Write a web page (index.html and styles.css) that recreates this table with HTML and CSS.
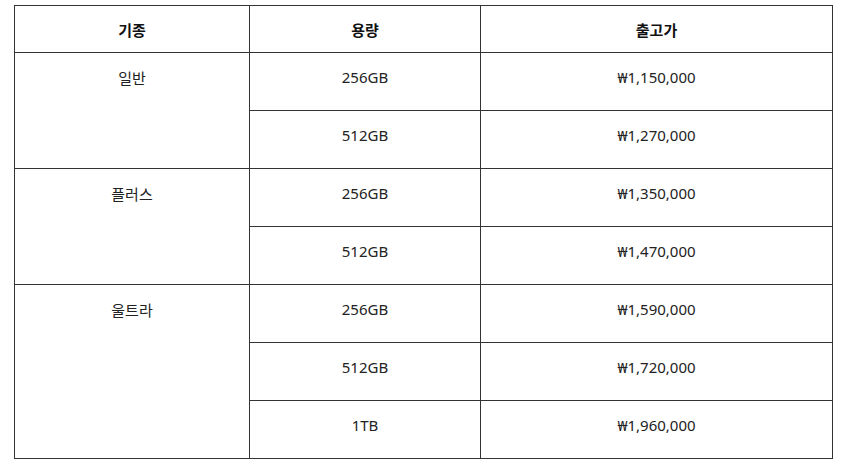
FILE: index.html
```html
<!DOCTYPE html>
<html lang="ko">
<head>
<meta charset="utf-8">
<link rel="stylesheet" href="styles.css">
</head>
<body>
<div class="wrap">
<table class="price">
  <colgroup>
    <col class="c1"><col class="c2"><col class="c3">
  </colgroup>
  <thead>
    <tr><th>기종</th><th>용량</th><th>출고가</th></tr>
  </thead>
  <tbody>
    <tr><td rowspan="2">일반</td><td>256GB</td><td>₩1,150,000</td></tr>
    <tr><td>512GB</td><td>₩1,270,000</td></tr>
    <tr><td rowspan="2">플러스</td><td>256GB</td><td>₩1,350,000</td></tr>
    <tr><td>512GB</td><td>₩1,470,000</td></tr>
    <tr><td rowspan="3">울트라</td><td>256GB</td><td>₩1,590,000</td></tr>
    <tr><td>512GB</td><td>₩1,720,000</td></tr>
    <tr><td>1TB</td><td>₩1,960,000</td></tr>
  </tbody>
</table>
</div>
</body>
</html>
```

FILE: styles.css
```css
html, body {
  margin: 0;
  padding: 0;
  background: #fff;
}
.wrap {
  padding: 5px 0 0 14px;
}
.price {
  border-collapse: collapse;
  width: 818px;
  table-layout: fixed;
  font-family: "Noto Sans", "Noto Sans CJK KR", sans-serif;
  font-size: 15px;
  color: #222;
}
.c1 { width: 235px; }
.c2 { width: 231px; }
.c3 { width: 352px; }
.price th, .price td {
  border: 1px solid #333;
  text-align: center;
  vertical-align: top;
  padding: 0;
}
.price th {
  height: 47px;
  box-sizing: border-box;
  vertical-align: middle;
  font-weight: 700;
  color: #111;
}
.price td {
  padding-top: 14px;
  box-sizing: border-box;
  height: 58px;
}
```
